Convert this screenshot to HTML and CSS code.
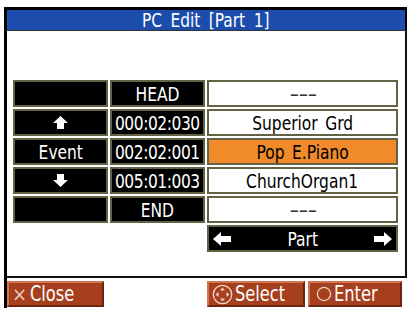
FILE: index.html
```html
<!DOCTYPE html>
<html>
<head>
<meta charset="utf-8">
<link rel="stylesheet" href="styles.css">
</head>
<body>
<div class="device">
  <div class="titlebar"><span class="ttl">PC Edit [Part 1]</span></div>
  <div class="content">
    <div class="grid">
      <div class="cell dark"></div>
      <div class="cell dark"><span class="txt">HEAD</span></div>
      <div class="cell light"><span class="txt dash">---</span></div>

      <div class="cell dark">
        <svg class="arrow-v" width="15" height="13" viewBox="0 0 15 13"><polygon points="7.5,0 15,7 11,7 11,13 4,13 4,7 0,7" fill="#fff"/></svg>
      </div>
      <div class="cell dark"><span class="txt num">000:02:030</span></div>
      <div class="cell light"><span class="txt">Superior Grd</span></div>

      <div class="cell dark"><span class="txt">Event</span></div>
      <div class="cell dark"><span class="txt num">002:02:001</span></div>
      <div class="cell sel"><span class="txt">Pop E.Piano</span></div>

      <div class="cell dark">
        <svg class="arrow-v" width="15" height="13" viewBox="0 0 15 13"><polygon points="7.5,13 15,6 11,6 11,0 4,0 4,6 0,6" fill="#fff"/></svg>
      </div>
      <div class="cell dark"><span class="txt num">005:01:003</span></div>
      <div class="cell light"><span class="txt">ChurchOrgan1</span></div>

      <div class="cell dark"></div>
      <div class="cell dark"><span class="txt">END</span></div>
      <div class="cell light"><span class="txt dash">---</span></div>

      <div class="empty"></div>
      <div class="empty"></div>
      <div class="cell dark part">
        <svg width="18" height="14" viewBox="0 0 18 14"><polygon points="0,7 8,0 8,4 18,4 18,10 8,10 8,14" fill="#fff"/></svg>
        <span class="txt">Part</span>
        <svg width="18" height="14" viewBox="0 0 18 14"><polygon points="18,7 10,0 10,4 0,4 0,10 10,10 10,14" fill="#fff"/></svg>
      </div>
    </div>
  </div>
  <div class="footer">
    <div class="btn close"><span class="x">×</span><span class="label">Close</span></div>
    <div class="gap"></div>
    <div class="btn select">
      <svg width="21" height="21" viewBox="0 0 21 21">
        <circle cx="10.5" cy="10.5" r="9.2" fill="none" stroke="#f3d6c8" stroke-width="1.3"/>
        <polygon points="10.5,3.5 13,6.5 8,6.5" fill="#f3d6c8"/>
        <polygon points="10.5,17.5 13,14.5 8,14.5" fill="#f3d6c8"/>
        <polygon points="3.5,10.5 6.5,8 6.5,13" fill="#f3d6c8"/>
        <polygon points="17.5,10.5 14.5,8 14.5,13" fill="#f3d6c8"/>
      </svg>
      <span class="label">Select</span>
    </div>
    <div class="btn enter">
      <svg width="16" height="16" viewBox="0 0 16 16"><circle cx="8" cy="8" r="6.6" fill="none" stroke="#f3d6c8" stroke-width="1.2"/></svg>
      <span class="label">Enter</span>
    </div>
  </div>
</div>
</body>
</html>
```
FILE: styles.css
```css
html, body {
  margin: 0;
  padding: 0;
  background: #fff;
}
body {
  width: 412px;
  height: 312px;
  overflow: hidden;
  font-family: "DejaVu Sans Condensed", "DejaVu Sans", "Liberation Sans", sans-serif;
}
.device {
  margin: 7px 0 0 4px;
  width: 403px;
}
.titlebar {
  height: 20px;
  background: #1c4dac;
  border-top: 3px solid #000;
  border-left: 3px solid #000;
  border-right: 2px solid #000;
  color: #fff;
  display: flex;
  justify-content: center;
  align-items: center;
}
.ttl {
  display: inline-block;
  font-size: 19px;
  line-height: 20px;
  word-spacing: 4px;
  transform: scaleX(0.9);
  white-space: nowrap;
}
.content {
  box-sizing: border-box;
  border-left: 3px solid #000;
  border-right: 2px solid #111;
  border-bottom: 2px solid #111;
  border-top: 1px solid #333;
  padding: 49px 0 0 6px;
  height: 248px;
}
.grid {
  display: grid;
  grid-template-columns: 95px 95px 191px;
  grid-auto-rows: 27px;
  gap: 2px;
}
.cell {
  box-sizing: border-box;
  border: 2px solid #646245;
  display: flex;
  align-items: center;
  justify-content: center;
  overflow: hidden;
}
.dark { background: #000; color: #fff; }
.light { background: #fff; color: #000; }
.sel { background: #f08a2a; color: #000; }
.txt {
  display: inline-block;
  font-size: 20px;
  line-height: 22px;
  white-space: nowrap;
  transform: scaleX(0.86);
  word-spacing: 3px;
}
.num {
  letter-spacing: -0.5px;
}
.dash {
  color: #333;
  letter-spacing: -0.5px;
  transform: scaleX(1.5);
}
.part {
  justify-content: space-between;
  padding: 0 4px;
}
.footer {
  display: grid;
  grid-template-columns: 97px 103px 98px 97px;
  padding: 3px 0 0 0;
  border-left: 3px solid #000;
  height: 30px;
  box-sizing: border-box;
}
.footer .enter { margin-left: 3px; }
.btn {
  box-sizing: border-box;
  height: 26px;
  background: #a53f1d;
  border: 2px solid;
  border-color: #d27552 #6c2410 #6c2410 #d27552;
  color: #fff;
  display: flex;
  align-items: center;
  white-space: nowrap;
  overflow: hidden;
}
.label {
  display: inline-block;
  font-size: 21px;
  line-height: 22px;
  transform: scaleX(0.86);
  transform-origin: left center;
}
.close { padding-left: 3px; }
.close .x {
  color: #f0c8b8;
  font-size: 20px;
  line-height: 20px;
  margin-right: 3px;
}
.select { padding-left: 3px; }
.select svg { margin-right: 2px; }
.enter { padding-left: 6px; }
.enter svg { margin-right: 2px; }
```
